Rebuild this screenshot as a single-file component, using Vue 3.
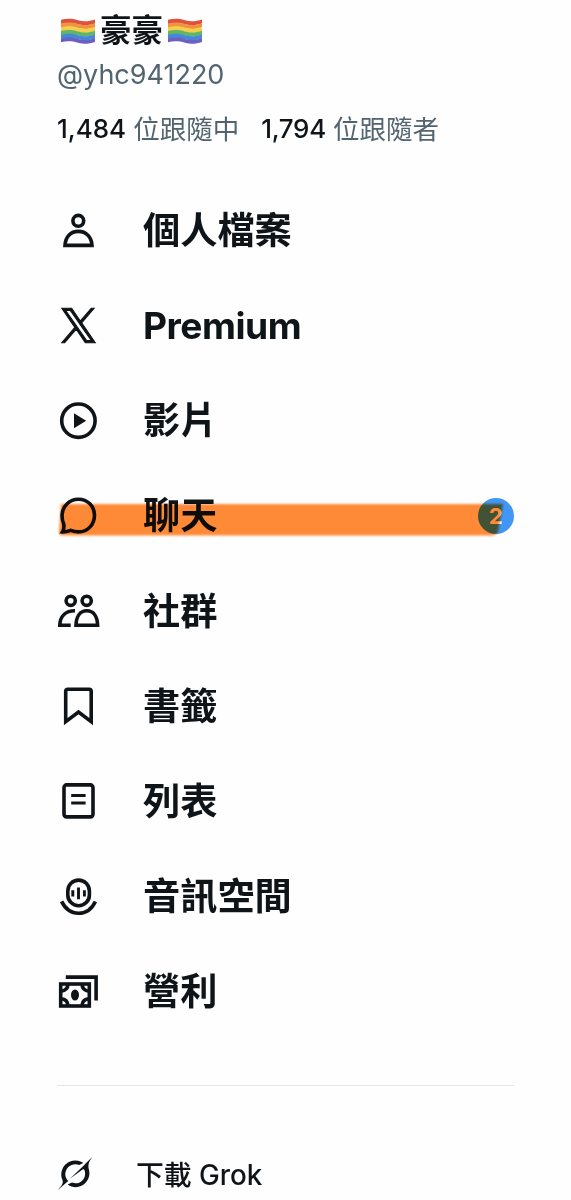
<script setup>
import { ref } from 'vue'

const user = ref({
  name: '豪豪',
  handle: '@yhc941220',
  following: '1,484',
  followers: '1,794'
})

const menuItems = [
  { key: 'profile', label: '個人檔案' },
  { key: 'premium', label: 'Premium' },
  { key: 'video', label: '影片' },
  { key: 'chat', label: '聊天', badge: 2 },
  { key: 'groups', label: '社群' },
  { key: 'bookmark', label: '書籤' },
  { key: 'list', label: '列表' },
  { key: 'spaces', label: '音訊空間' },
  { key: 'money', label: '營利' }
]

const stripes = ['#e0503f', '#ee9440', '#f3cf4c', '#62b565', '#4488d8', '#6c5fc0']

// 彩虹旗每一條色帶
const stripePath = (i) => {
  const y = 1.8 + i * 3.75
  const b = y + (i === 5 ? 3.75 : 4.1)
  return `M0 ${y}C6 ${y - 1.6} 11 ${y - 1.2} 17 ${y + 0.4}S28 ${y + 1.6} 34 ${y - 0.4}V${b - 0.4}C28 ${b + 1.6} 23 ${b + 2} 17 ${b + 0.4}S6 ${b - 1.6} 0 ${b}Z`
}
</script>

<template>
  <div class="drawer">
    <header class="profile">
      <h1 class="name">
        <svg class="flag" viewBox="0 0 34 27">
          <path v-for="(color, i) in stripes" :key="color" :d="stripePath(i)" :fill="color" />
        </svg>
        <span>{{ user.name }}</span>
        <svg class="flag" viewBox="0 0 34 27">
          <path v-for="(color, i) in stripes" :key="color" :d="stripePath(i)" :fill="color" />
        </svg>
      </h1>
      <div class="handle">{{ user.handle }}</div>
      <div class="stats">
        <span class="stat"><b>{{ user.following }}</b><span>位跟隨中</span></span>
        <span class="stat"><b>{{ user.followers }}</b><span>位跟隨者</span></span>
      </div>
    </header>

    <nav class="menu">
      <a v-for="item in menuItems" :key="item.key" class="menu-item" :class="item.key">
        <svg class="icon" viewBox="0 0 44 44">
          <g v-if="item.key === 'profile'">
            <circle cx="22.3" cy="11.8" r="5.4" />
            <path d="M9 36.4C9.4 28 14.5 22.4 22.3 22.4S35.6 28 36 36.4Z" />
          </g>
          <path
            v-else-if="item.key === 'premium'"
            class="x-logo"
            transform="translate(5.7 4.3) scale(.028)"
            d="M714.163 519.284L1160.89 0H1055.03L667.137 450.887L357.328 0H0L468.492 681.821L0 1226.37H105.866L515.491 750.218L842.672 1226.37H1200L714.137 519.284ZM569.165 687.828L521.697 619.934L144.011 79.694H306.615L611.412 515.685L658.88 583.579L1055.08 1150.3H892.476Z"
          />
          <g v-else-if="item.key === 'video'">
            <circle cx="22.4" cy="21.7" r="16.7" />
            <path class="solid" d="M18 14.2L30.2 21.7L18 29.2Z" />
          </g>
          <path
            v-else-if="item.key === 'chat'"
            d="M6.5 37.9C8 35.5 8.4 33 7.6 29.5C6.4 27 5.9 24.4 6.1 20.7C6.6 12 13.5 5.2 22.4 5.2C31.6 5.2 38.5 12.2 38.5 21.3C38.5 30.7 31.6 37.9 22.6 37.9C19.6 37.9 17.4 37.4 14.7 36.3C12 37.4 9.7 38.1 6.5 37.9Z"
          />
          <g v-else-if="item.key === 'groups'">
            <circle cx="14.7" cy="11.8" r="4.6" />
            <circle cx="30.7" cy="11.8" r="4.6" />
            <path d="M14.7 36.2H3.8C4.1 27.4 9.3 21.8 19 21.8" />
            <path d="M20 36.2C20.3 27.4 24 21.8 30.8 21.8S41.3 27.4 41.6 36.2Z" />
          </g>
          <path v-else-if="item.key === 'bookmark'" d="M9.7 37.6V7.3Q9.7 5.2 11.8 5.2H33.1Q35.2 5.2 35.2 7.3V37.6L22.5 28Z" />
          <g v-else-if="item.key === 'list'">
            <rect x="8" y="5.9" width="29" height="32" rx="2.6" />
            <path class="thin" d="M15.2 16.5H29.6M15.2 24H29.6" />
          </g>
          <g v-else-if="item.key === 'spaces'">
            <rect x="11.8" y="5.1" width="21.6" height="25.6" rx="10.8" />
            <path class="thin" d="M16.8 15.2V21.6M22.5 12.6V24.2M28.4 15.2V21.6" />
            <path d="M5.6 26.4C9.5 34.5 15.4 38.2 22.5 38.2S35.6 34.5 39.4 26.4" />
          </g>
          <g v-else>
            <path d="M9.8 7.1H40.1V30.4" />
            <rect x="4.7" y="14" width="28.6" height="22" />
            <path d="M5 21.2Q11.8 20.6 12 14M26 14Q26.2 20.6 33 21.2M5 28.8Q11.8 29.4 12 36M26 36Q26.2 29.4 33 28.8" />
            <ellipse class="solid" cx="19" cy="25" rx="4" ry="5.5" />
          </g>
        </svg>
        <span class="label">{{ item.label }}</span>
        <span v-if="item.badge" class="badge">{{ item.badge }}</span>
        <svg v-if="item.badge" class="marker" viewBox="0 0 454 42">
          <path d="M6 5H448L443 33Q441 36.5 436 36.5H8Q4 36.5 4 33Z" />
        </svg>
      </a>
    </nav>

    <hr class="divider" />

    <a class="grok">
      <svg class="grok-icon" viewBox="0 0 38 38">
        <path class="solid" d="M14.4 23.8L27 14.5C27.7 14 28.6 14.2 28.9 14.9C30.3 18.4 29.7 22.6 26.8 25.5C24 28.4 20 29 16.4 27.6L12.2 29.6C18.1 33.7 25.4 32.7 29.9 28.1C33.5 24.5 34.6 19.6 33.5 15.1C32 8.6 33.9 6 37 1.7L29.1 9.6V9.7L14.4 23.8" transform="translate(-1.5 1)" />
        <path class="solid" d="M12.2 26.5C8 22.5 8.7 16.2 12.3 12.6C15 9.9 19.4 8.8 23.2 10.4L27.3 8.5C26.6 7.9 25.6 7.3 24.5 6.9C19.5 4.9 13.5 5.9 9.4 10C5.5 13.9 4.2 20 6.3 25.1C7.9 28.9 5.3 31.6 2.7 34.4L1.3 36L12.2 26.5" transform="translate(-1 .5)" />
      </svg>
      <span>下載 Grok</span>
    </a>
  </div>
</template>

<style>
body {
  margin: 0;
  background: #fff;
  overflow: hidden;
}
</style>

<style scoped>
.drawer {
  box-sizing: border-box;
  width: 571px;
  height: 1200px;
  padding: 9px 57px 0;
  overflow: hidden;
  background: #fefefe;
  color: #0f1419;
  font-family: Inter, 'Noto Sans CJK TC', sans-serif;
}

.name {
  display: flex;
  align-items: center;
  gap: 5px;
  height: 44px;
  margin: 0;
  padding-left: 4px;
  font-size: 31.5px;
  line-height: 44px;
  font-weight: 700;
}

.flag {
  width: 34px;
  height: 27px;
}

.handle {
  height: 44px;
  line-height: 44px;
  font-size: 27px;
  color: #536471;
}

.stats {
  display: flex;
  gap: 23px;
  height: 64px;
  line-height: 64px;
  font-size: 26.5px;
  white-space: nowrap;
  color: #536471;
}

.stat {
  display: flex;
  gap: 7px;
}

.stat b {
  font-weight: 500;
  font-size: 26px;
  color: #0f1419;
}

.stat + .stat {
  margin-left: -1px;
}

.stat + .stat b {
  letter-spacing: -0.3px;
}

.menu {
  padding-top: 22px;
}

.menu-item {
  position: relative;
  display: flex;
  align-items: center;
  height: 95.15px;
}

.icon {
  flex: none;
  width: 44px;
  height: 44px;
  margin-left: -1px;
  fill: none;
  stroke: #0f1419;
  stroke-width: 3.6;
}

.thin {
  stroke-width: 2.9;
}

.solid {
  fill: #0f1419;
  stroke: none;
}

.x-logo {
  fill: #0f1419;
  stroke-width: 36;
}

.label {
  margin-left: 43px;
  padding-top: 1px;
  font-size: 37.2px;
  line-height: 50px;
  font-weight: 700;
}

.premium .label {
  letter-spacing: -0.5px;
}

.badge {
  width: 36px;
  height: 36px;
  margin-left: auto;
  border-radius: 50%;
  background: #4296f5;
  color: #fff;
  font-size: 22px;
  line-height: 36px;
  font-weight: 700;
  text-align: center;
}

/* 螢光筆塗抹 */
.marker {
  position: absolute;
  left: -2px;
  top: 31px;
  width: 454px;
  height: 42px;
  fill: #ff8b38;
  filter: blur(1px);
  mix-blend-mode: multiply;
}

.divider {
  height: 1px;
  margin: 46px 0 0;
  border: 0;
  background: #e3e6e8;
}

.grok {
  display: flex;
  align-items: center;
  height: 40px;
  margin-top: 67px;
  gap: 41px;
  font-size: 27.8px;
  font-weight: 500;
}

.grok-icon {
  width: 38px;
  height: 38px;
}
</style>
